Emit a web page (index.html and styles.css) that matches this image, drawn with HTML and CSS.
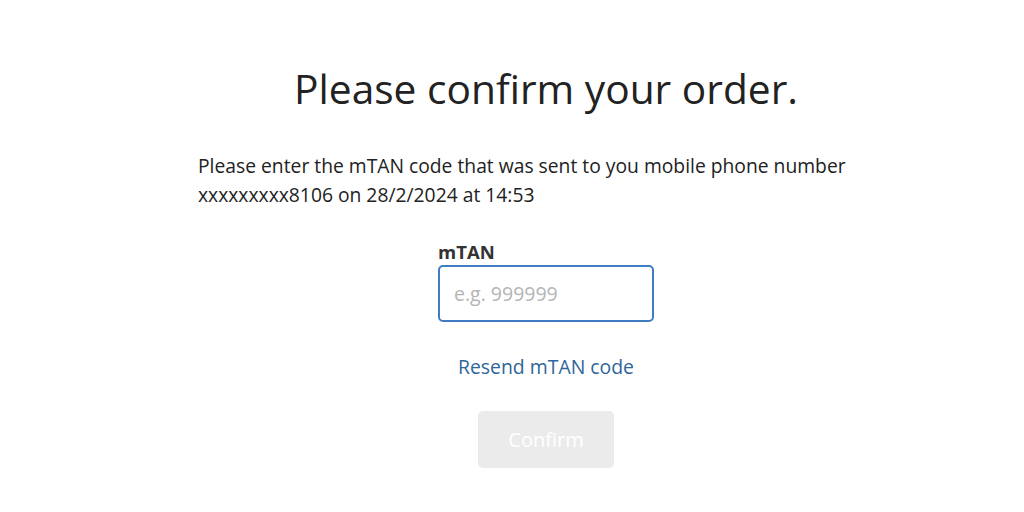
FILE: index.html
```html
<!DOCTYPE html>
<html lang="en">
<head>
  <meta charset="UTF-8" />
  <title>Confirm order</title>
  <link rel="stylesheet" href="styles.css">
</head>
<body>
  <div class="container">
    <h1>Please confirm your order.</h1>

    <p class="intro">
      Please enter the mTAN code that was sent to you mobile phone number<br />
      xxxxxxxxx8106 on 28/2/2024 at 14:53
    </p>

    <form class="mtan-form">
      <div class="field">
        <label for="mtan">mTAN</label>
        <input type="text" id="mtan" placeholder="e.g. 999999" autofocus />
      </div>
      <a class="resend" href="#">Resend mTAN code</a>
      <button type="submit" disabled>Confirm</button>
    </form>
  </div>
</body>
</html>
```

FILE: styles.css
```css
body {
  font-family: 'Open Sans', sans-serif;
  background: #fff;
  color: #222;
  margin: 0;
  padding: 0;
}

.container {
  width: 696px;
  margin-left: 198px;
  padding-top: 62px;
}

h1 {
  text-align: center;
  font-size: 40.7px;
  font-weight: 400;
  margin: 0 0 37px;
  line-height: 52px;
}

.intro {
  font-size: 19.3px;
  line-height: 29px;
  margin: 0 0 31px;
  color: #222;
}

.mtan-form {
  display: flex;
  flex-direction: column;
  align-items: center;
}

.field {
  display: flex;
  flex-direction: column;
}

.field label {
  font-weight: 700;
  font-size: 18.5px;
  line-height: 24px;
  margin-bottom: 1px;
  color: #333;
}

.field input {
  width: 216px;
  height: 57px;
  box-sizing: border-box;
  border: 2px solid #3f7cc2;
  border-radius: 5px;
  padding: 0 14px;
  font-family: 'Open Sans', sans-serif;
  font-size: 19.5px;
  outline: none;
  caret-color: #333;
}

.field input::placeholder {
  color: #b5b5b5;
}

.resend {
  color: #2e6699;
  text-decoration: none;
  font-size: 19.4px;
  line-height: 24px;
  margin-top: 33px;
}

button {
  margin-top: 32px;
  width: 136px;
  height: 57px;
  background: #ebebeb;
  color: #fff;
  border: none;
  border-radius: 5px;
  font-family: 'Open Sans', sans-serif;
  font-size: 20px;
}
```
